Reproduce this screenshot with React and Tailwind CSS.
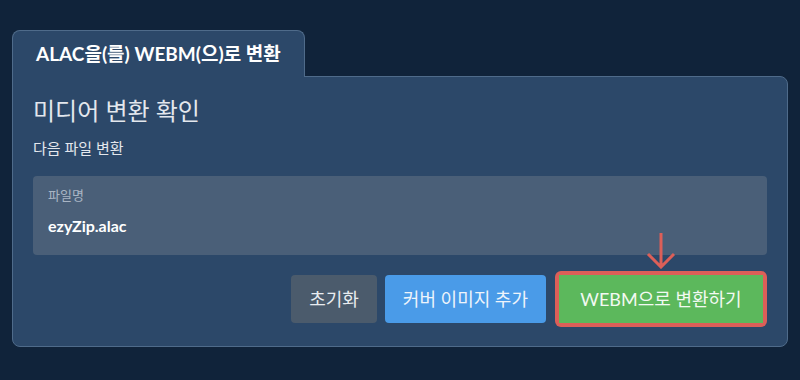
import React from "react";

const font = { fontFamily: 'Lato, "Noto Sans CJK KR", sans-serif' };

export default function App() {
  return (
    <div
      className="w-[800px] h-[380px] bg-[#10233a] pt-[30px] px-[12px] text-white"
      style={font}
    >
      <div className="flex">
        <div className="relative z-10 -mb-px h-[47px] px-[23px] flex items-center border border-b-0 border-[#4f6b8a] rounded-t-[8px] bg-[#2c4869]">
          <span className="text-[19px] font-bold text-white">
            ALAC을(를) WEBM(으)로 변환
          </span>
        </div>
      </div>
      <div className="border border-[#4f6b8a] rounded-b-[8px] rounded-tr-[8px] bg-[#2c4869] px-[20px] pt-[18px] pb-[19px]">
        <h1 className="text-[24px] leading-[32px] text-[#e3e7ed] font-normal">
          미디어 변환 확인
        </h1>
        <p className="mt-[11px] text-[15px] leading-[20px] text-[#e3e7ed]">
          다음 파일 변환
        </p>
        <div className="mt-[18px] h-[79px] rounded-[4px] bg-[#4a5f78] px-[15px] pt-[11px]">
          <div className="text-[13px] leading-[16px] text-[#a9b5c4]">파일명</div>
          <div className="mt-[11px] text-[16px] leading-[24px] font-bold text-white">
            ezyZip.alac
          </div>
        </div>
        <div className="mt-[16px] flex items-center justify-end">
          <button className="h-[48px] px-[18px] rounded-[4px] bg-[#4b5b6c] text-[18px] text-[#e8ecf0]">
            초기화
          </button>
          <button className="ml-[8px] h-[48px] px-[18px] rounded-[4px] bg-[#4a9be8] text-[18px] text-[#eef4fb]">
            커버 이미지 추가
          </button>
          <div className="relative ml-[9px] p-[4px] rounded-[6px] bg-[#dc5f58]">
            <svg
              className="absolute left-1/2 -translate-x-1/2 top-[-39px]"
              width="32"
              height="37"
              viewBox="0 0 32 37"
              fill="none"
            >
              <path
                d="M16 1 V35 M3 22 L16 35 L29 22"
                stroke="#dc5f58"
                strokeWidth="3"
              />
            </svg>
            <button className="h-[48px] w-[204px] bg-[#5cb85c] text-[18px] text-[#f2f9f2]">
              WEBM으로 변환하기
            </button>
          </div>
        </div>
      </div>
    </div>
  );
}
